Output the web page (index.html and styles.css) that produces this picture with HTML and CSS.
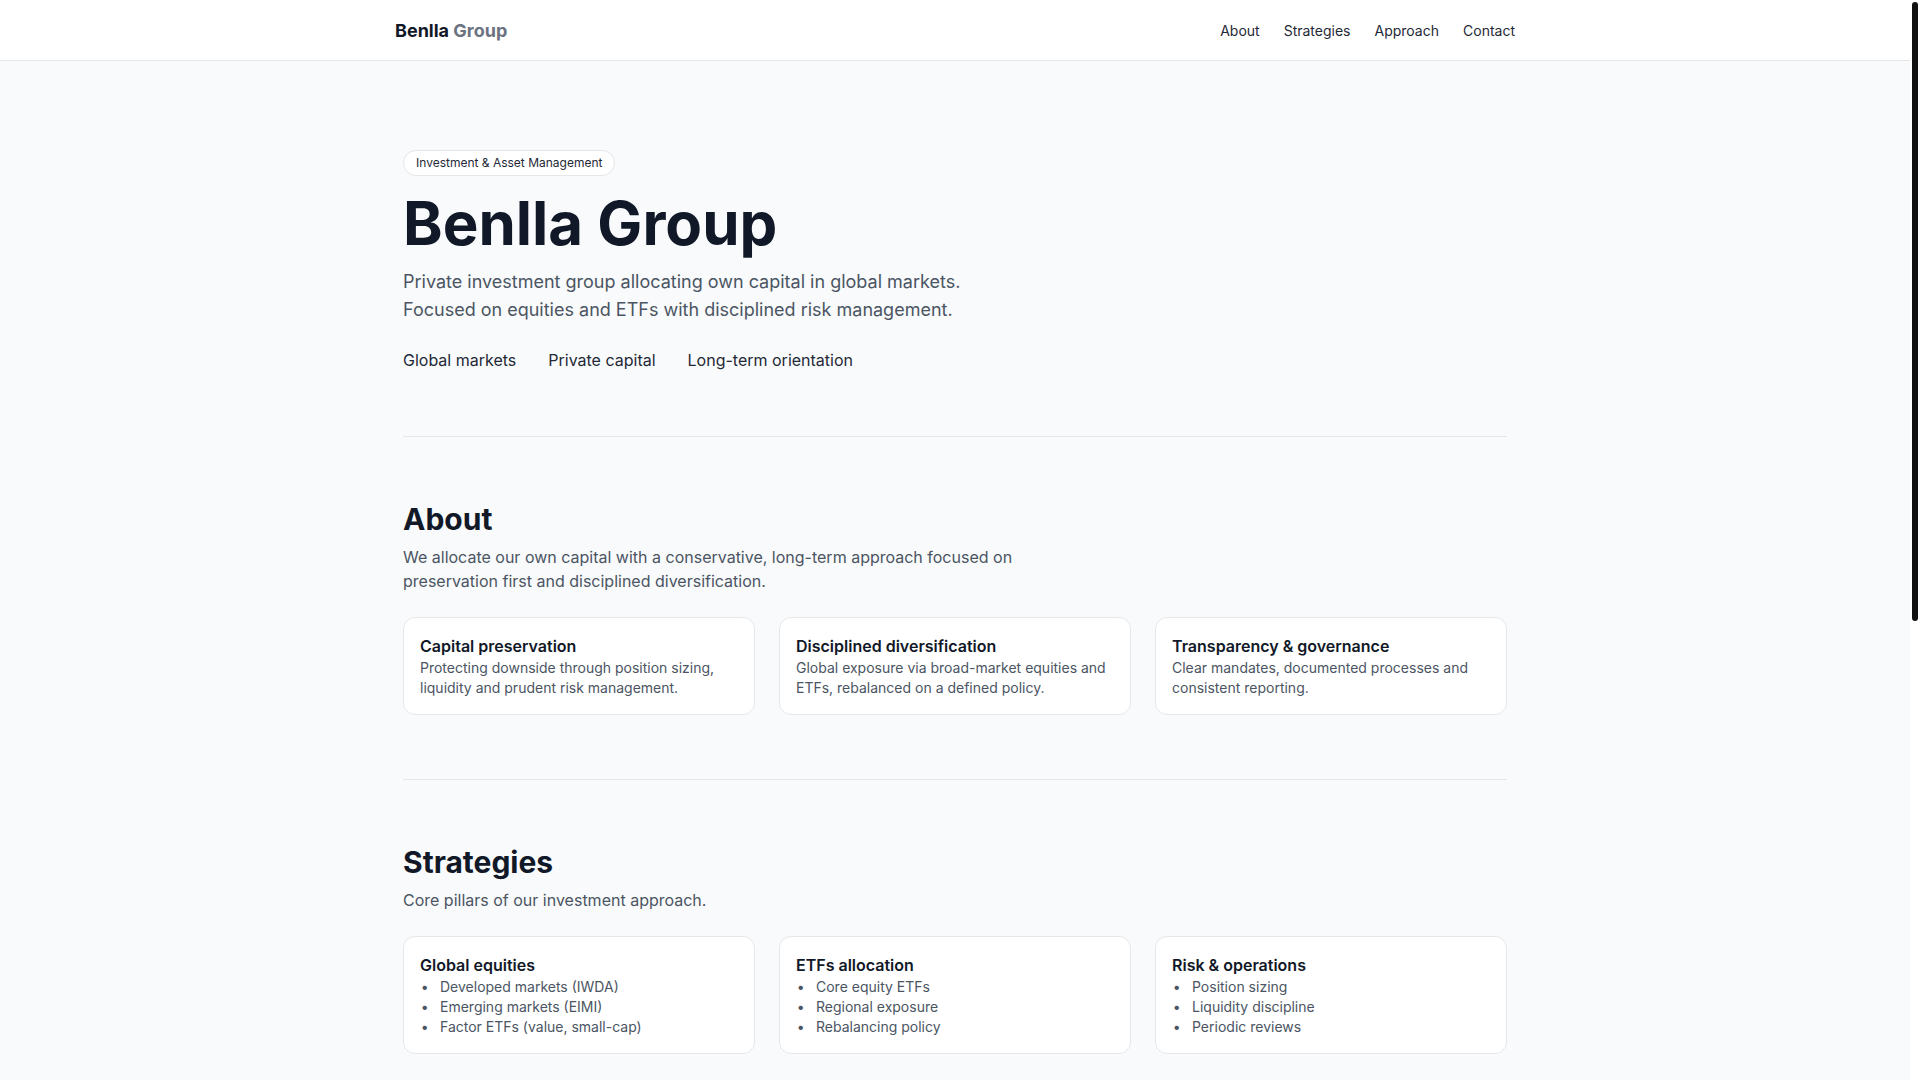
FILE: index.html
```html
<!DOCTYPE html>
<html lang="en">
<head>
<meta charset="utf-8">
<title>Benlla Group</title>
<link rel="stylesheet" href="styles.css">
</head>
<body>
<div class="page">
<header class="site-header">
  <div class="header-inner">
    <a class="logo" href="#">Benlla <span class="logo-muted">Group</span></a>
    <nav class="nav">
      <a href="#about">About</a>
      <a href="#strategies">Strategies</a>
      <a href="#approach">Approach</a>
      <a href="#contact">Contact</a>
    </nav>
  </div>
</header>

<main class="container">
  <section class="hero">
    <span class="badge">Investment &amp; Asset Management</span>
    <h1 class="hero-title">Benlla Group</h1>
    <p class="hero-lead">Private investment group allocating own capital in global markets.<br>Focused on equities and ETFs with disciplined risk management.</p>
    <ul class="hero-tags">
      <li>Global markets</li>
      <li>Private capital</li>
      <li>Long-term orientation</li>
    </ul>
  </section>

  <section class="section" id="about">
    <h2 class="section-title">About</h2>
    <p class="section-lead">We allocate our own capital with a conservative, long-term approach focused on preservation first and disciplined diversification.</p>
    <div class="card-grid">
      <div class="card">
        <h3 class="card-title">Capital preservation</h3>
        <p class="card-text">Protecting downside through position sizing, liquidity and prudent risk management.</p>
      </div>
      <div class="card">
        <h3 class="card-title">Disciplined diversification</h3>
        <p class="card-text">Global exposure via broad-market equities and ETFs, rebalanced on a defined policy.</p>
      </div>
      <div class="card">
        <h3 class="card-title">Transparency &amp; governance</h3>
        <p class="card-text">Clear mandates, documented processes and consistent reporting.</p>
      </div>
    </div>
  </section>

  <section class="section" id="strategies">
    <h2 class="section-title">Strategies</h2>
    <p class="section-lead">Core pillars of our investment approach.</p>
    <div class="card-grid">
      <div class="card">
        <h3 class="card-title">Global equities</h3>
        <ul class="card-list">
          <li>Developed markets (IWDA)</li>
          <li>Emerging markets (EIMI)</li>
          <li>Factor ETFs (value, small-cap)</li>
        </ul>
      </div>
      <div class="card">
        <h3 class="card-title">ETFs allocation</h3>
        <ul class="card-list">
          <li>Core equity ETFs</li>
          <li>Regional exposure</li>
          <li>Rebalancing policy</li>
        </ul>
      </div>
      <div class="card">
        <h3 class="card-title">Risk &amp; operations</h3>
        <ul class="card-list">
          <li>Position sizing</li>
          <li>Liquidity discipline</li>
          <li>Periodic reviews</li>
        </ul>
      </div>
    </div>
  </section>

  <section class="section" id="approach">
    <h2 class="section-title">Approach</h2>
    <p class="section-lead">A simple, repeatable process applied with discipline.</p>
    <div class="card-grid">
      <div class="card">
        <h3 class="card-title">1. Research</h3>
        <p class="card-text">Top-down view of markets combined with a review of costs, liquidity and structure.</p>
      </div>
      <div class="card">
        <h3 class="card-title">2. Allocation</h3>
        <p class="card-text">Position sizing within defined limits and a diversified core portfolio.</p>
      </div>
      <div class="card">
        <h3 class="card-title">3. Review</h3>
        <p class="card-text">Periodic monitoring, rebalancing and documentation of every decision.</p>
      </div>
    </div>
  </section>

  <section class="section" id="contact">
    <h2 class="section-title">Contact</h2>
    <p class="section-lead">For inquiries, please reach out by email.</p>
    <div class="contact-card">
      <h3 class="card-title">Benlla Group</h3>
      <p class="card-text">info@benllagroup.com</p>
    </div>
  </section>
</main>

<footer class="site-footer">
  <div class="footer-inner">
    <span>© 2025 Benlla Group. All rights reserved.</span>
    <span>Private investment group</span>
  </div>
</footer>
</div>
<div class="scroll-track" aria-hidden="true"><div class="scroll-thumb"></div></div>
</body>
</html>
```

FILE: styles.css
```css
* { box-sizing: border-box; }

html, body { height: 100%; }

body {
  margin: 0;
  overflow: hidden;
  display: grid;
  grid-template-columns: 1fr 10px;
  background: #f9fafb;
  color: #111827;
  font-family: Inter, "Noto Sans", "Liberation Sans", sans-serif;
}

.page {
  height: 100vh;
  overflow-y: auto;
  min-width: 0;
}

.scroll-track {
  height: 100vh;
  background: #ffffff;
  padding: 2px;
}

.scroll-thumb {
  height: 619px;
  border-radius: 3px;
  background: #111111;
}

a { color: inherit; text-decoration: none; }

h1, h2, h3, p, ul { margin: 0; }

.site-header {
  background: #ffffff;
  border-bottom: 1px solid #e5e7eb;
}

.header-inner {
  max-width: 1152px;
  margin: 0 auto;
  padding: 0 16px;
  height: 60px;
  display: flex;
  align-items: center;
  justify-content: space-between;
}

.logo {
  font-size: 18px;
  font-weight: 700;
  color: #111827;
}

.logo-muted { color: #6b7280; }

.nav {
  display: flex;
  gap: 24px;
  font-size: 14px;
  color: #1f2937;
}

.container {
  max-width: 1152px;
  margin: 0 auto;
  padding: 0 24px;
}

.hero {
  padding: 89px 0 64px;
}

.badge {
  display: inline-block;
  font-size: 12px;
  line-height: 16px;
  padding: 4px 12px;
  border: 1px solid #e5e7eb;
  border-radius: 999px;
  background: #ffffff;
  color: #1f2937;
}

.hero-title {
  margin-top: 17px;
  font-size: 60px;
  line-height: 1;
  font-weight: 700;
  color: #111827;
}

.hero-lead {
  margin-top: 15px;
  font-size: 18px;
  line-height: 28px;
  color: #4b5563;
}

.hero-tags {
  margin-top: 24px;
  padding: 0;
  list-style: none;
  display: flex;
  gap: 32px;
  font-size: 16px;
  line-height: 24px;
  color: #1f2937;
}

.section {
  border-top: 1px solid #e5e7eb;
  padding: 64px 0;
}

.section-title {
  font-size: 30px;
  line-height: 36px;
  font-weight: 700;
  color: #111827;
}

.section-lead {
  margin-top: 8px;
  max-width: 672px;
  font-size: 16px;
  line-height: 24px;
  color: #4b5563;
}

.card-grid {
  margin-top: 24px;
  display: grid;
  grid-template-columns: repeat(3, 1fr);
  gap: 24px;
}

.card, .contact-card {
  background: #ffffff;
  border: 1px solid #e5e7eb;
  border-radius: 12px;
  padding: 16px;
}

.contact-card {
  margin-top: 24px;
  max-width: 540px;
  display: flex;
  flex-direction: column;
  gap: 4px;
}

.card-title {
  font-size: 16px;
  line-height: 24px;
  font-weight: 600;
  color: #111827;
}

.card-text {
  font-size: 14px;
  line-height: 20px;
  color: #4b5563;
}

.card-list {
  padding-left: 20px;
  list-style: disc;
  font-size: 14px;
  line-height: 20px;
  color: #4b5563;
}

.card-list li::marker {
  content: "\2022\00a0\00a0\00a0";
  color: #4b5563;
}

.site-footer {
  border-top: 1px solid #e5e7eb;
  background: #ffffff;
}

.footer-inner {
  max-width: 1152px;
  margin: 0 auto;
  padding: 32px 24px;
  display: flex;
  justify-content: space-between;
  font-size: 14px;
  line-height: 20px;
  color: #6b7280;
}
```
